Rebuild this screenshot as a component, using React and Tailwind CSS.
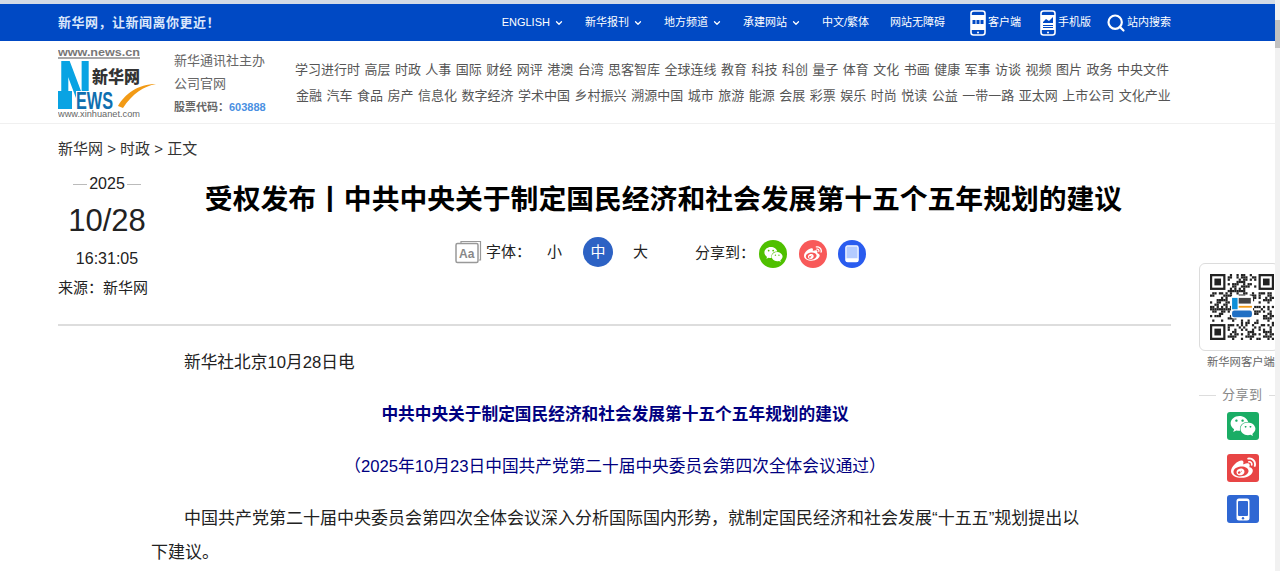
import { ChevronDown, Search } from 'lucide-react';
import { FaWeixin, FaWeibo } from 'react-icons/fa';

const FONT = 'font-["Liberation_Sans","Noto_Sans_CJK_SC",sans-serif]';

const topLinks = [
  { label: 'ENGLISH', arrow: true },
  { label: '新华报刊', arrow: true },
  { label: '地方频道', arrow: true },
  { label: '承建网站', arrow: true },
  { label: '中文/繁体' },
  { label: '网站无障碍' },
];

const navRows = [
  ['学习进行时', '高层', '时政', '人事', '国际', '财经', '网评', '港澳', '台湾', '思客智库', '全球连线', '教育', '科技', '科创', '量子', '体育', '文化', '书画', '健康', '军事', '访谈', '视频', '图片', '政务', '中央文件'],
  ['金融', '汽车', '食品', '房产', '信息化', '数字经济', '学术中国', '乡村振兴', '溯源中国', '城市', '旅游', '能源', '会展', '彩票', '娱乐', '时尚', '悦读', '公益', '一带一路', '亚太网', '上市公司', '文化产业'],
];

function PhoneIcon({ kind }) {
  return (
    <svg width="16" height="26" viewBox="0 0 16 26" fill="none" className="shrink-0">
      <rect x="1" y="1" width="14" height="24" rx="2.5" stroke="#fff" strokeWidth="1.6" />
      <rect x="1" y="5" width="14" height="15" fill="#fff" />
      {kind === 'app' ? (
        <g fill="#0049c4">
          <rect x="2.5" y="10" width="3" height="4" />
          <rect x="6.5" y="10" width="3" height="4" />
          <rect x="10.5" y="10" width="3" height="4" />
        </g>
      ) : (
        <g fill="#0049c4">
          <path d="M3 12l3-3 3 2 4-4v6H3z" />
          <rect x="3" y="15" width="10" height="1" />
          <rect x="3" y="17" width="10" height="1" />
        </g>
      )}
      <circle cx="8" cy="22.5" r="1" fill="#fff" />
    </svg>
  );
}

function Logo() {
  return (
    <svg width="100" height="73" viewBox="0 -2 100 73" className="shrink-0">
      <text x="0" y="8" fontFamily="Liberation Sans" fontWeight="700" fontSize="11" fill="#777" textLength="82" lengthAdjust="spacingAndGlyphs">www.news.cn</text>
      <rect x="0" y="9" width="82" height="2" fill="#a8a8a8" />
      <text x="1" y="60" fontFamily="Liberation Sans" fontWeight="700" fontSize="66" fill="#09a3e3" stroke="#09a3e3" strokeWidth="2" textLength="32" lengthAdjust="spacingAndGlyphs">N</text>
      <rect x="18" y="43" width="38" height="19" fill="#fff" />
      <rect x="0" y="43" width="14" height="18" fill="#09a3e3" />
      <text x="34" y="35" fontFamily="Noto Sans CJK SC" fontWeight="900" fontSize="16.5" fill="#333" textLength="48" lengthAdjust="spacingAndGlyphs">新华网</text>
      <text x="18" y="61" fontFamily="Liberation Sans" fontWeight="700" fontSize="24" fill="#0f6fb0" textLength="37" lengthAdjust="spacingAndGlyphs">EWS</text>
      <path d="M60 58C67 46 80 36 98 36C86 38 74 46 65 60z" fill="#f29a15" />
      <text x="0" y="69" fontFamily="Liberation Sans" fontSize="9.5" fill="#666" textLength="82" lengthAdjust="spacingAndGlyphs">www.xinhuanet.com</text>
    </svg>
  );
}

function FontIcon() {
  return (
    <svg width="27" height="25" viewBox="0 0 27 25" fill="none">
      <path d="M6 3V1.5h19.5V20H24" stroke="#999" strokeWidth="1.2" />
      <rect x="1" y="3.5" width="22" height="19" rx="1.5" stroke="#999" strokeWidth="1.5" fill="#fff" />
      <text x="4" y="18" fontFamily="Liberation Sans" fontWeight="700" fontSize="12" fill="#888">Aa</text>
    </svg>
  );
}

function Tablet({ size = 16 }) {
  return (
    <svg width={size} height={size * 1.25} viewBox="0 0 16 20" fill="none">
      <rect x="1" y="1" width="14" height="18" rx="2" fill="#b4cbff" stroke="#fff" strokeWidth="1.4" />
      <rect x="1" y="15" width="14" height="4" rx="1" fill="#fff" />
    </svg>
  );
}

// finder pattern plus pseudo random modules, the centre is covered by the app icon
function QrCode() {
  const n = 29;
  const cells = [];
  for (let y = 0; y < n; y++) {
    for (let x = 0; x < n; x++) {
      const inFinder = (x < 8 && y < 8) || (x > n - 9 && y < 8) || (x < 8 && y > n - 9);
      if (inFinder) continue;
      if ((x * 7 + y * 13 + ((x * y) % 5) * 3 + (x ^ y)) % 3 === 0 || (x * x + y * 3) % 7 === 0) {
        cells.push(<rect key={x + '-' + y} x={x} y={y} width="1" height="1" />);
      }
    }
  }
  const finders = [[0, 0], [n - 7, 0], [0, n - 7]];
  return (
    <svg width="64" height="66" viewBox="0 0 29 29" preserveAspectRatio="none" fill="#222" className="shrink-0">
      {cells}
      {finders.map(([x, y]) => (
        <g key={x + '' + y}>
          <rect x={x} y={y} width="7" height="7" />
          <rect x={x + 1} y={y + 1} width="5" height="5" fill="#fff" />
          <rect x={x + 2} y={y + 2} width="3" height="3" />
        </g>
      ))}
      <rect x="9.5" y="9.5" width="10" height="10" rx="1" fill="#fff" />
      <rect x="10" y="10.5" width="2.5" height="5" fill="#0d8fd8" />
      <rect x="13" y="10.5" width="5.5" height="2.5" fill="#444" />
      <rect x="13" y="14" width="6" height="0.8" fill="#f29a15" />
      <rect x="10" y="16" width="9" height="3" rx="1" fill="#1f6fc4" />
    </svg>
  );
}

function SidePanel() {
  return (
    <div className="absolute left-[1199px] top-[263px] w-[76px] flex flex-col items-center overflow-hidden">
      <div className="w-[80px] h-[88px] ml-[4px] border border-[#dcdcdc] rounded-[6px] bg-white flex items-center pl-[10px] shrink-0">
        <QrCode />
      </div>
      <div className="mt-[1px] ml-[8px] self-start text-[11.3px] leading-[20px] text-[#666] whitespace-nowrap">新华网客户端</div>
      <div className="mt-[13px] w-full flex items-center gap-[6px] text-[13px] leading-[20px] text-[#888] tracking-[0.5px]">
        <span className="h-px bg-[#ddd] w-[17px] shrink-0" />
        <span className="whitespace-nowrap">分享到</span>
        <span className="h-px bg-[#ddd] flex-1" />
      </div>
      <div className="mt-[7px] ml-[12px] w-[32px] h-[28px] rounded-[3px] bg-[#1aad65] flex items-center justify-center">
        <FaWeixin className="text-white text-[26px]" />
      </div>
      <div className="mt-[14px] ml-[12px] w-[32px] h-[28px] rounded-[3px] bg-[#e84545] flex items-center justify-center">
        <FaWeibo className="text-white text-[25px]" />
      </div>
      <div className="mt-[13px] ml-[12px] w-[32px] h-[28px] rounded-[3px] bg-[#2f67d3] flex items-center justify-center">
        <svg width="14" height="23" viewBox="0 0 14 23">
          <rect x="0.5" y="0.5" width="13" height="22" rx="2.5" fill="#fff" />
          <rect x="2" y="3" width="10" height="15" rx="1" fill="#2f67d3" />
          <circle cx="7" cy="20.3" r="1.2" fill="#2f67d3" />
        </svg>
      </div>
    </div>
  );
}

export default function App() {
  return (
    <div className={`${FONT} h-[571px] overflow-hidden flex bg-white`}>
      <div className="relative flex-1 min-w-0">
        <div className="h-[4px] bg-[#d3dbe6]" />

        <div className="h-[37px] bg-[#0049c4] text-white pl-[58px] pr-[104px] flex items-center">
          <div className="text-[13px] font-bold text-[#dbe7fb] tracking-[0.5px]">新华网，让新闻离你更近！</div>
          <div className="ml-auto flex items-center text-[11px] gap-[21px]">
            {topLinks.map(l => (
              <span key={l.label} className="flex items-center gap-[4px] whitespace-nowrap">
                {l.label}
                {l.arrow && <ChevronDown size={10} strokeWidth={3} />}
              </span>
            ))}
            <span className="flex items-center gap-[2px] ml-[4px] whitespace-nowrap"><PhoneIcon kind="app" />客户端</span>
            <span className="flex items-center gap-[2px] -ml-[2px] whitespace-nowrap"><PhoneIcon kind="chart" />手机版</span>
            <span className="flex items-center gap-[1px] -ml-[6px] whitespace-nowrap"><Search size={20} strokeWidth={2.6} />站内搜索</span>
          </div>
        </div>

        <div className="h-[83px] border-b border-[#f0f0f0] pl-[58px] pr-[104px] flex items-center">
          <Logo />
          <div className="ml-[16px] w-[100px] shrink-0 text-[13px] text-[#666] flex flex-col mt-[4px]">
            <span className="leading-[22px] whitespace-nowrap">新华通讯社主办</span>
            <span className="leading-[22px] mt-[1px]">公司官网</span>
            <span className="leading-[22px] mt-[1px] font-bold text-[11px] whitespace-nowrap">股票代码：<span className="text-[#4a90e2]">603888</span></span>
          </div>
          <div className="ml-auto w-[875px] shrink-0 text-[13px] text-[#555] flex flex-col gap-[7px] pt-[1px]">
            {navRows.map((row, i) => (
              <div key={i} className={`flex justify-between leading-[19px] whitespace-nowrap ${i === 0 ? 'pr-[2px] -ml-[1px]' : ''}`}>
                {row.map(t => <span key={t}>{t}</span>)}
              </div>
            ))}
          </div>
        </div>

        <div className="mx-[58px] w-[1113px]">
          <div className="pt-[14px] text-[15px] leading-[22px] text-[#333]">新华网 &gt; 时政 &gt; 正文</div>

          <div className="flex border-b-2 border-[#ddd] h-[166px] pt-[13px]">
            <div className="w-[98px] shrink-0 flex flex-col items-center text-[#222]">
              <div className="flex items-center gap-[2px] text-[16px] leading-[22px]">
                <span className="h-px w-[14px] bg-[#bbb]" />2025<span className="h-px w-[14px] bg-[#bbb]" />
              </div>
              <div className="text-[31px] leading-[40px] mt-[6px]">10/28</div>
              <div className="text-[16px] leading-[22px] mt-[7px]">16:31:05</div>
              <div className="self-start text-[15px] leading-[22px] mt-[7px] whitespace-nowrap">来源：新华网</div>
            </div>

            <div className="flex-1 min-w-0 flex flex-col items-center">
              <h1 className="text-[27.8px] font-bold leading-[40px] text-black whitespace-nowrap mt-[7px]">受权发布丨中共中央关于制定国民经济和社会发展第十五个五年规划的建议</h1>
              <div className="mt-[16px] self-start ml-[299px] flex items-center text-[15px] text-[#222]">
                <FontIcon />
                <span className="ml-[4px]">字体：</span>
                <span className="ml-[16px]">小</span>
                <span className="ml-[21px] w-[30px] h-[30px] rounded-full bg-[#2d62c4] text-white flex items-center justify-center">中</span>
                <span className="ml-[20px]">大</span>
                <span className="ml-[47px] mt-[3px]">分享到：</span>
                <span className="ml-[4px] mt-[4px] w-[28px] h-[28px] rounded-full bg-[#4fc000] flex items-center justify-center">
                  <FaWeixin className="text-white text-[19px]" />
                </span>
                <span className="ml-[12px] mt-[4px] w-[28px] h-[28px] rounded-full bg-[#f85959] flex items-center justify-center">
                  <FaWeibo className="text-white text-[18px]" />
                </span>
                <span className="ml-[11px] mt-[4px] w-[28px] h-[28px] rounded-full bg-[#2a5cef] flex items-center justify-center">
                  <Tablet size={14} />
                </span>
              </div>
            </div>
          </div>

          <div className="w-[932px] ml-[93px] mt-[20px] text-[16.7px] leading-[34px] text-[#222] flex flex-col gap-[18px]">
            <p className="indent-[33px]">新华社北京10月28日电</p>
            <p className="text-center font-bold text-[#000080] pr-[4px]">中共中央关于制定国民经济和社会发展第十五个五年规划的建议</p>
            <p className="text-center text-[#000080] pr-[4px]">（2025年10月23日中国共产党第二十届中央委员会第四次全体会议通过）</p>
            <p className="indent-[33px] text-[17px]">中国共产党第二十届中央委员会第四次全体会议深入分析国际国内形势，就制定国民经济和社会发展“十五五”规划提出以下建议。</p>
          </div>
        </div>

        <SidePanel />
      </div>

      <div className="w-[5px] shrink-0 bg-[#f1f1f1] pt-[20px]">
        <div className="h-[28px] bg-[#c1c1c1]" />
      </div>
    </div>
  );
}
